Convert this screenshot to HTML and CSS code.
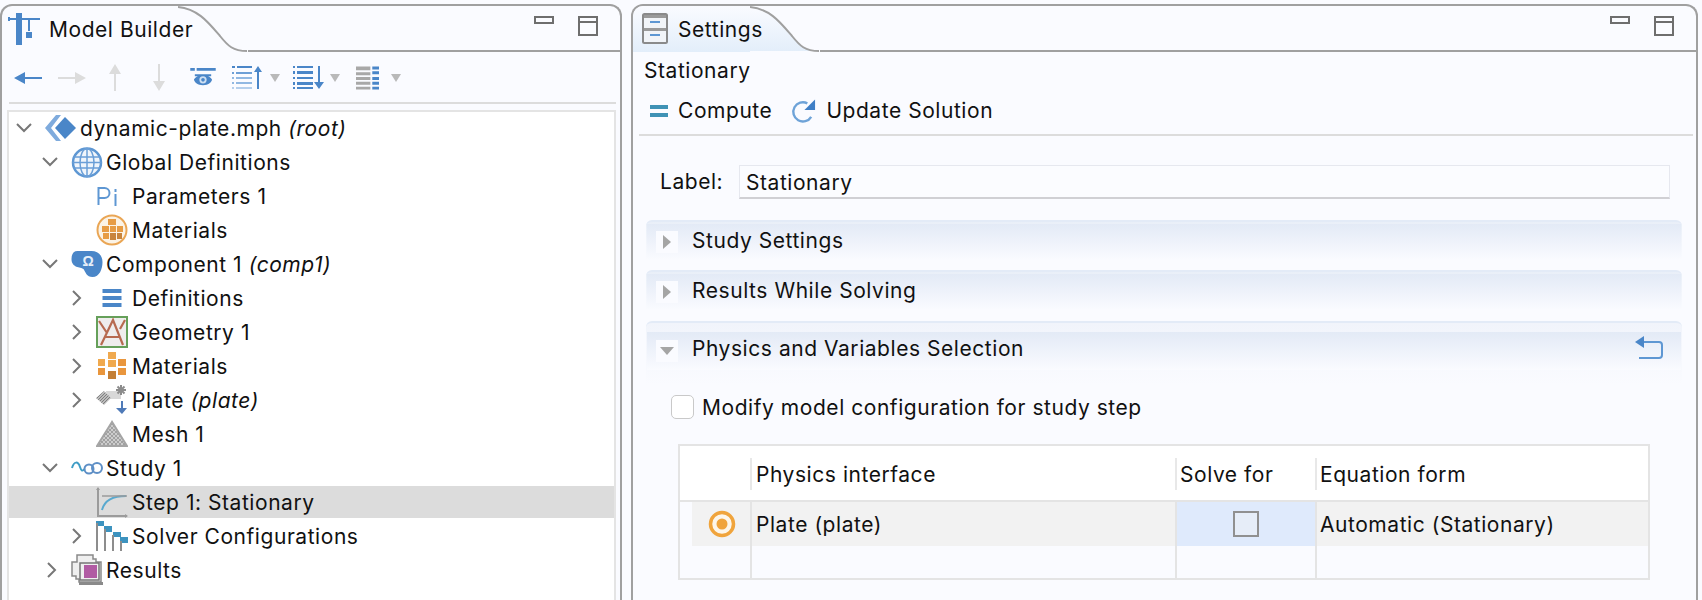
FILE: index.html
```html
<!DOCTYPE html>
<html lang="en">
<head>
<meta charset="utf-8">
<title>Model Builder and Settings</title>
<link rel="stylesheet" href="styles.css">
</head>
<body>
<div class="app">
  <section class="panel panel-left">
    <header class="panel-head">
      <div class="tab">
        <svg class="tab-icon" width="34" height="34" viewBox="0 0 34 34"><path fill="#4a86c8" d="M8 1h6v32H8zM0 5h2v1h30v2H22v11h-2V8H2v1H0z"/><rect x="18" y="20" width="6" height="6" fill="#4a86c8"/></svg>
        <span class="tab-title">Model Builder</span>
      </div>
      <svg class="tab-curve" width="70" height="46" viewBox="0 0 70 46"><path d="M0 1C20 3 30 16 42 30 50 40 55 45 69 45" fill="none" stroke="#a0a0a0" stroke-width="2"/></svg>
      <div class="head-rest">
        <span class="btn-min"></span><span class="btn-max"></span>
      </div>
    </header>
    <div class="toolbar">
      <svg width="28" height="14" viewBox="0 0 28 14" class="t1"><path fill="#4a86c8" d="M0 7l11-6v5h17v2H11v5z"/></svg>
      <svg width="28" height="14" viewBox="0 0 28 14" class="t2"><path fill="#dcdcdc" d="M28 7L17 1v5H0v2h17v5z"/></svg>
      <svg width="14" height="28" viewBox="0 0 14 28" class="t3"><path fill="#dcdcdc" d="M7 0l6 10H8v17H6V10H1z"/></svg>
      <svg width="14" height="28" viewBox="0 0 14 28" class="t4"><path fill="#dcdcdc" d="M7 27l6-10H8V0H6v17H1z"/></svg>
      <svg width="26" height="20" viewBox="0 0 28 22" class="t5"><path fill="#4a86c8" d="M0 0h5v3H0zM7 0h21v3H7zM5 7h18v2H5zM14 8c6 0 9 3 10 5-1 3-4 6-10 6S5 16 4 13c1-2 4-5 10-5z"/><circle cx="14" cy="13" r="4" fill="#cfe0f2"/><circle cx="14" cy="13" r="2" fill="#4a86c8"/></svg>
      <svg width="32" height="24" viewBox="0 0 32 24" class="t6"><path fill="#4a86c8" d="M2 0h3v2H2zM7 0h15v2H7z"/><path fill="#6d9fd6" d="M2 6h2v2H2zM6 6h16v2H6z"/><path fill="#91b8e2" d="M2 11h2v2H2zM6 11h16v2H6zM2 16h2v2H2zM6 16h16v2H6z"/><path fill="#b5cfec" d="M2 21h2v2H2zM6 21h16v2H6z"/><path fill="#4a86c8" d="M28 0l4 6h-3v17h-2V6h-3z"/></svg>
      <svg class="caret c-a" width="10" height="8" viewBox="0 0 10 8"><path fill="#b9b9b9" d="M0 0h10L5 8z"/></svg>
      <svg width="32" height="24" viewBox="0 0 32 24" class="t7"><path fill="#4a86c8" d="M0 0h2v2H0zM4 0h16v2H4zM0 5h2v3H0zM4 5h16v3H4zM0 11h2v2H0zM4 11h16v2H4zM0 16h2v3H0zM4 16h16v3H4zM0 21h2v2H0zM4 21h16v2H4zM25 0h2v16h4l-5 7-5-7h4z"/></svg>
      <svg class="caret c-b" width="10" height="8" viewBox="0 0 10 8"><path fill="#b9b9b9" d="M0 0h10L5 8z"/></svg>
      <svg width="23" height="24" viewBox="0 0 24 24" class="t8"><path fill="#a8a8a8" d="M0 0h15v4H0zM0 6h15v3H0zM0 11h15v3H0zM0 16h15v3H0zM0 21h15v3H0z"/><path fill="#4a86c8" d="M17 0h7v3h-7zM17 5h7v3h-7zM17 11h7v3h-7zM17 16h7v3h-7zM17 21h7v3h-7z"/></svg>
      <svg class="caret c-c" width="10" height="8" viewBox="0 0 10 8"><path fill="#b9b9b9" d="M0 0h10L5 8z"/></svg>
    </div>
    <div class="tree">
      <div class="row l0">
        <svg class="chev" width="30" height="16" viewBox="0 0 30 16"><path d="M8 4l7 7 7-7" fill="none" stroke="#777" stroke-width="2"/></svg>
        <svg class="ico" width="32" height="26" viewBox="0 0 32 26"><path fill="#7fabdd" d="M11 0L0 13l11 13h5L6 13 16 0z"/><path fill="#4a86c8" d="M20 2l11 11-11 11-10-11z"/></svg>
        <span>dynamic-plate.mph <em>(root)</em></span>
      </div>
      <div class="row l1">
        <svg class="chev" width="30" height="16" viewBox="0 0 30 16"><path d="M8 4l7 7 7-7" fill="none" stroke="#777" stroke-width="2"/></svg>
        <svg class="ico" width="31" height="31" viewBox="0 0 31 31"><circle cx="15.500" cy="15.500" r="14" fill="#f0f5fb" stroke="#5e97d3" stroke-width="2.500"/><g fill="none" stroke="#6b9fd7" stroke-width="1.500"><ellipse cx="15.500" cy="15.500" rx="7" ry="14"/><path d="M15.500 1v29M2 10h27M2 21h27M1 15.500h29"/></g></svg>
        <span>Global Definitions</span>
      </div>
      <div class="row l2">
        <span class="chev chev-none"></span>
        <svg class="ico" width="31" height="24" viewBox="0 0 31 24"><g fill="none" stroke="#5e97d3" stroke-width="2"><path d="M2 21V4h6a4 4 0 010 10H2"/></g><path fill="#5e97d3" d="M18 5h2v3h-2zM18 10h2v12h-2z"/></svg>
        <span>Parameters 1</span>
      </div>
      <div class="row l2">
        <span class="chev chev-none"></span>
        <svg class="ico" width="32" height="32" viewBox="0 0 32 32"><circle cx="16" cy="16" r="14.500" fill="#fbf3e6" stroke="#eaa655" stroke-width="2"/><g fill="#e79c44"><rect x="12" y="5" width="8" height="6"/><rect x="6" y="12" width="7" height="6"/><rect x="14" y="12" width="6" height="6"/><rect x="21" y="12" width="6" height="6"/><rect x="7" y="19" width="6" height="6"/></g><g fill="#c8843c"><rect x="14" y="19" width="6" height="7"/><rect x="21" y="19" width="5" height="6"/></g></svg>
        <span>Materials</span>
      </div>
      <div class="row l1">
        <svg class="chev" width="30" height="16" viewBox="0 0 30 16"><path d="M8 4l7 7 7-7" fill="none" stroke="#777" stroke-width="2"/></svg>
        <svg class="ico" width="31" height="28" viewBox="0 0 31 28"><path fill="#4a86c8" d="M6 1h14c6 0 11 4 11 11 0 7-3 15-10 15-6 0-7-5-9-8-3-2-12-1-12-10 0-5 2-8 6-8z"/><text x="11" y="16" class="omega">Ω</text></svg>
        <span>Component 1 <em>(comp1)</em></span>
      </div>
      <div class="row l2">
        <svg class="chev" width="30" height="20" viewBox="0 0 30 20"><path d="M13 3l7 7-7 7" fill="none" stroke="#777" stroke-width="2"/></svg>
        <svg class="ico" width="31" height="18" viewBox="0 0 31 18"><path fill="#4a86c8" d="M6 0h19v4H6zM6 7h19v4H6zM6 14h19v4H6z"/></svg>
        <span>Definitions</span>
      </div>
      <div class="row l2">
        <svg class="chev" width="30" height="20" viewBox="0 0 30 20"><path d="M13 3l7 7-7 7" fill="none" stroke="#777" stroke-width="2"/></svg>
        <svg class="ico" width="32" height="32" viewBox="0 0 32 32"><rect x="1" y="1" width="30" height="30" fill="#efeded" stroke="#66a05a" stroke-width="2"/><path d="M5 29L17 4l10 25M9 21h15M3 5l8 12M29 4l-5 9" fill="none" stroke="#b76a50" stroke-width="2.200"/></svg>
        <span>Geometry 1</span>
      </div>
      <div class="row l2">
        <svg class="chev" width="30" height="20" viewBox="0 0 30 20"><path d="M13 3l7 7-7 7" fill="none" stroke="#777" stroke-width="2"/></svg>
        <svg class="ico" width="32" height="28" viewBox="0 0 32 28"><g fill="#f0a94e"><rect x="12" y="0" width="8" height="7"/><rect x="2" y="7" width="7" height="7"/><rect x="12" y="8" width="8" height="7"/></g><g fill="#e9963d"><rect x="22" y="7" width="8" height="7"/><rect x="2" y="16" width="7" height="7"/><rect x="22" y="16" width="8" height="7"/></g><rect x="12" y="19" width="8" height="8" fill="#c47f35"/></svg>
        <span>Materials</span>
      </div>
      <div class="row l2">
        <svg class="chev" width="30" height="20" viewBox="0 0 30 20"><path d="M13 3l7 7-7 7" fill="none" stroke="#777" stroke-width="2"/></svg>
        <svg class="ico" width="32" height="32" viewBox="0 0 32 32"><defs><pattern id="hatch" width="3" height="3" patternUnits="userSpaceOnUse"><rect width="3" height="3" fill="#bdbdbd"/><path d="M0 3l3-3" stroke="#7f7f7f" stroke-width="1"/></pattern></defs><path fill="#d8d8d8" d="M10 7h15v8H11z"/><path fill="url(#hatch)" d="M0 14l8-7 7 7-7 7z"/><path stroke="#8c8c8c" stroke-width="2" d="M25 1v10M20 6h10M21.500 2.500l7 7M28.500 2.500l-7 7"/><path fill="#4f7ab8" d="M25 17h2v7h4l-5 6-6-6h5z"/></svg>
        <span>Plate <em>(plate)</em></span>
      </div>
      <div class="row l2">
        <span class="chev chev-none"></span>
        <svg class="ico" width="32" height="28" viewBox="0 0 32 28"><defs><pattern id="mesh" width="4" height="4" patternUnits="userSpaceOnUse"><rect width="4" height="4" fill="#cdcdcd"/><path d="M0 4L4 0M0 0l4 4" stroke="#969696" stroke-width=".8"/></pattern></defs><path fill="url(#mesh)" stroke="#a5a5a5" stroke-width="2" d="M16 2L1 26h30z"/></svg>
        <span>Mesh 1</span>
      </div>
      <div class="row l1">
        <svg class="chev" width="30" height="16" viewBox="0 0 30 16"><path d="M8 4l7 7 7-7" fill="none" stroke="#777" stroke-width="2"/></svg>
        <svg class="ico" width="32" height="16" viewBox="0 0 32 16"><path d="M1 8c2-7 6-7 8-1s3 3 5 2" fill="none" stroke="#3f9dc6" stroke-width="2"/><circle cx="18" cy="9" r="4.500" fill="none" stroke="#5e8fc6" stroke-width="2"/><circle cx="26" cy="8" r="5" fill="none" stroke="#5e8fc6" stroke-width="2"/></svg>
        <span>Study 1</span>
      </div>
      <div class="row l2 selected">
        <span class="chev chev-none"></span>
        <svg class="ico" width="32" height="32" viewBox="0 0 32 32"><path d="M2 2v28h29" fill="none" stroke="#9b9b9b" stroke-width="2"/><path d="M0 4l2-3 2 3zM29 28l3 2-3 2z" fill="#9b9b9b"/><path d="M6 24c2-8 8-14 24-14" fill="none" stroke="#59a9cf" stroke-width="2"/><path d="M6 10h25" stroke="#9b9b9b" stroke-width="1.500"/></svg>
        <span>Step 1: Stationary</span>
      </div>
      <div class="row l2">
        <svg class="chev" width="30" height="20" viewBox="0 0 30 20"><path d="M13 3l7 7-7 7" fill="none" stroke="#777" stroke-width="2"/></svg>
        <svg class="ico" width="32" height="30" viewBox="0 0 32 30"><path fill="#3d93bf" d="M0 0h8v5H0zM8 5h8v6H8zM17 11h8v5h-8zM24 16h8v6h-8z"/><path stroke="#8d8d8d" stroke-width="2" d="M1 2v28M9 8v22M17 14v16M25 20v10"/></svg>
        <span>Solver Configurations</span>
      </div>
      <div class="row l1">
        <svg class="chev" width="30" height="20" viewBox="0 0 30 20"><path d="M13 3l7 7-7 7" fill="none" stroke="#777" stroke-width="2"/></svg>
        <svg class="ico" width="32" height="32" viewBox="0 0 32 32"><path fill="#efefef" stroke="#8a8a8a" stroke-width="1.500" d="M6 1h16v4h3v3h5v20H8v-3H5v-3H1V8h5z"/><path fill="#8a8a8a" d="M0 22l8 6v3h24v-3H8z"/><rect x="9" y="9" width="19" height="17" fill="#efefef" stroke="#777" stroke-width="1.500"/><rect x="13" y="11" width="13" height="13" fill="#b15ba3"/></svg>
        <span>Results</span>
      </div>
    </div>
  </section>

  <section class="panel panel-right">
    <header class="panel-head">
      <div class="tab tab-active">
        <svg class="tab-icon" width="26" height="32" viewBox="0 0 26 32"><rect x="1" y="1" width="24" height="29" rx="1.500" fill="#f1f4f8" stroke="#8a8a8a" stroke-width="2"/><path fill="#9a9a9a" d="M2 2h22v3H2zM2 15h22v3H2z"/><path fill="#5e97d3" d="M8 8h10v2H8zM8 21h10v2H8z"/></svg>
        <span class="tab-title">Settings</span>
      </div>
      <svg class="tab-curve" width="70" height="46" viewBox="0 0 70 46"><defs><linearGradient id="tabfill" x1="0" y1="0" x2="0" y2="1"><stop offset="0" stop-color="#fafbff"/><stop offset="1" stop-color="#e3eefa"/></linearGradient></defs><path d="M0 1C20 3 30 16 42 30 50 40 55 45 69 45H0z" fill="url(#tabfill)"/><path d="M0 1C20 3 30 16 42 30 50 40 55 45 69 45" fill="none" stroke="#a0a0a0" stroke-width="2"/></svg>
      <div class="head-rest">
        <span class="btn-min"></span><span class="btn-max"></span>
      </div>
    </header>
    <div class="settings-title">Stationary</div>
    <div class="actions">
      <span class="action"><svg width="18" height="12" viewBox="0 0 18 12"><path fill="#3f92b5" d="M0 0h18v4H0zM0 8h18v4H0z"/></svg>Compute</span>
      <span class="action"><svg width="25" height="26" viewBox="0 0 26 26"><path d="M21 19a10 10 0 11-4-14" fill="none" stroke="#6ea3d8" stroke-width="2.500"/><path fill="#3f7fc6" d="M25 1v11H14z"/></svg>Update Solution</span>
    </div>
    <div class="body">
      <div class="label-row">
        <span class="label-text">Label:</span>
        <div class="label-input">Stationary</div>
      </div>
      <div class="section">
        <div class="sec-head">
          <span class="twist"><svg width="8" height="14" viewBox="0 0 8 14"><path fill="#a5a5a5" d="M0 0l8 7-8 7z"/></svg></span>
          <span class="sec-title">Study Settings</span>
        </div>
      </div>
      <div class="section">
        <div class="sec-head">
          <span class="twist"><svg width="8" height="14" viewBox="0 0 8 14"><path fill="#a5a5a5" d="M0 0l8 7-8 7z"/></svg></span>
          <span class="sec-title">Results While Solving</span>
        </div>
      </div>
      <div class="section section-open">
        <div class="sec-head">
          <span class="twist"><svg width="14" height="8" viewBox="0 0 14 8"><path fill="#a5a5a5" d="M0 0h14L7 8z"/></svg></span>
          <span class="sec-title">Physics and Variables Selection</span>
          <svg class="undo" width="28" height="24" viewBox="0 0 28 24"><path d="M8 6h16a3 3 0 013 3v10a3 3 0 01-3 3H4" fill="none" stroke="#5e97d3" stroke-width="2"/><path fill="#4a86c8" d="M0 6l9-6v12z"/></svg>
        </div>
      </div>
      <label class="check-row"><span class="check"></span>Modify model configuration for study step</label>
      <div class="table">
        <div class="cell head c1"></div>
        <div class="cell head c2"><span class="head-sep"></span>Physics interface</div>
        <div class="cell head c3"><span class="head-sep"></span>Solve for</div>
        <div class="cell head c4"><span class="head-sep"></span>Equation form</div>
        <div class="cell data c1"><span class="row-shade"></span><svg class="radio" width="28" height="28" viewBox="0 0 28 28"><circle cx="14" cy="14" r="11.500" fill="#fdf6ea" stroke="#f0a43c" stroke-width="3.500"/><circle cx="14" cy="14" r="5.500" fill="#f0a43c"/></svg></div>
        <div class="cell data c2">Plate (plate)</div>
        <div class="cell data c3 solve"><span class="solve-box"></span></div>
        <div class="cell data c4">Automatic (Stationary)</div>
        <div class="cell empty"></div>
        <div class="cell empty"></div>
        <div class="cell empty"></div>
        <div class="cell empty"></div>
      </div>
    </div>
  </section>
</div>
</body>
</html>
```

FILE: styles.css
```css
* { box-sizing: border-box; }
html, body { margin: 0; height: 100%; overflow: hidden; background: #fafbff; }
body { font-family: Inter, "Liberation Sans", sans-serif; font-size: 21px; letter-spacing: 0.55px; color: #111; }

.app { display: flex; height: 600px; padding-top: 4px; gap: 9px; }
.panel { border: 2px solid #a0a0a0; border-bottom: 0; border-radius: 12px 12px 0 0; display: flex; flex-direction: column; height: 596px; overflow: hidden; }
.panel-left { width: 622px; }
.panel-right { width: 1067px; }

.panel-head { display: flex; height: 46px; flex: none; }
.tab { display: flex; align-items: center; flex: none; position: relative; z-index: 1; }
.tab-icon { flex: none; display: block; }
.panel-left .tab { width: 176px; padding-left: 6px; }
.tab-title { margin-left: 7px; white-space: nowrap; flex: none; }
.tab-active { width: 117px; padding-left: 9px; background: linear-gradient(#fafbff, #e3eefa); }
.tab-active .tab-title { margin-left: 10px; }
.tab-curve { flex: none; display: block; }
.head-rest { flex: 1; border-bottom: 2px solid #a0a0a0; display: flex; justify-content: flex-end; align-items: flex-start; padding: 10px 22px 0 0; gap: 24px; }
.btn-min { width: 20px; height: 8px; border: 2px solid #6e6e6e; }
.btn-max { width: 20px; height: 20px; border: 2px solid #6e6e6e; background: linear-gradient(#6e6e6e, #6e6e6e) 0 3px / 100% 2px no-repeat; }

.toolbar { height: 52px; margin: 0 4px 0 7px; border-bottom: 2px solid #dcdcdc; display: flex; align-items: center; flex: none; padding-left: 5px; padding-top: 1px; }
.toolbar svg { display: block; flex: none; }
.t2 { margin-left: 16px; }
.t3 { margin-left: 22px; }
.t4 { margin-left: 30px; }
.t5 { margin-left: 24px; }
.t6 { margin-left: 14px; }
.t7 { margin-left: 13px; }
.t8 { margin-left: 16px; }
.c-a { margin-left: 8px; }
.c-b { margin-left: 5px; }
.c-c { margin-left: 12px; }

.tree { margin: 6px 4px 0 5px; flex: 1; border: 2px solid #e4e4e4; border-bottom: 0; background: #fff; }
.row { display: flex; align-items: center; height: 32px; margin-bottom: 2px; white-space: nowrap; }
.row em { font-style: italic; }
.chev { flex: none; width: 30px; margin-right: 6px; display: block; }
.ico { flex: none; width: 32px; margin-right: 4px; display: block; }
.omega { font-family: "Liberation Sans", sans-serif; font-size: 14px; font-weight: 700; fill: #e6eff9; letter-spacing: 0; }
.l0 { padding-left: 0; }
.l1 { padding-left: 26px; }
.l2 { padding-left: 51px; }
.l0 .ico, .l1 .ico { margin-right: 3px; }
.selected { background: #dcdcdc; }

.settings-title { height: 36px; padding-left: 11px; display: flex; align-items: center; flex: none; }
.actions { display: flex; align-items: center; margin: 0 3px 0 6px; height: 48px; padding-left: 11px; padding-bottom: 1px; border-bottom: 2px solid #dcdcdc; flex: none; gap: 19px; }
.action { display: flex; align-items: center; gap: 10px; }

.body { padding: 28px 15px 0 13px; flex: 1; }
.label-row { display: flex; align-items: center; height: 35px; padding-left: 14px; }
.label-text { width: 79px; flex: none; }
.label-input { width: 931px; height: 34px; border: 1px solid #e6e8ef; border-bottom: 2px solid #d0d0d4; padding: 2px 0 0 6px; display: flex; align-items: center; background: #fbfcff; }

.section { width: 1036px; height: 40px; margin-bottom: 10px; padding: 2px 1px 0; border-top: 2px solid #e3ebf7; border-radius: 6px 6px 0 0; background: linear-gradient(#e9eff8, #fafbff); }
.label-row + .section { margin-top: 21px; }
.sec-head { height: 36px; padding-left: 9px; display: flex; align-items: center; background: linear-gradient(#e3eaf6, #fafbff); gap: 14px; position: relative; }
.sec-title { margin-bottom: 4px; }
.section-open { height: 64px; margin-top: 11px; margin-bottom: 0; padding-top: 9px; background: linear-gradient(#f1f4fb, #fafbff); }
.section-open .sec-head { height: 38px; }
.section-open .sec-title { margin-bottom: 6px; }
.twist { width: 22px; height: 22px; background: #fafbff; display: flex; align-items: center; justify-content: center; flex: none; }
.undo { position: absolute; right: 18px; top: 4px; }

.check-row { display: flex; align-items: center; gap: 8px; margin-left: 25px; height: 26px; margin-top: 9px; }
.check { width: 23px; height: 24px; border: 1px solid #c9c9c9; border-radius: 5px; background: #fff; flex: none; }

.table { display: grid; grid-template-columns: 70px 425px 140px 1fr; grid-template-rows: 56px 44px 32px; width: 972px; margin: 24px 0 0 32px; border: 2px solid #e4e4e4; }
.cell { display: flex; align-items: center; padding-left: 4px; border-left: 2px solid #e4e4e4; position: relative; }
.cell.c1, .cell.empty:nth-child(9) { border-left: 0; }
.head { background: #fff; border-left: 0; border-bottom: 2px solid #e4e4e4; padding: 2px 0 0 6px; }
.head.c3, .head.c4 { padding-left: 5px; }
.data { background: #f2f2f2; }
.data.c4 { padding-left: 3px; }
.head-sep { position: absolute; left: 0; top: 12px; height: 32px; width: 2px; background: #e8e8e8; }
.data.c1 { background: transparent; justify-content: center; padding: 0 0 0 14px; }
.row-shade { position: absolute; left: 12px; right: 0; top: 0; bottom: 0; background: #f2f2f2; }
.radio { position: relative; display: block; }
.solve { background: #dfeafc; justify-content: center; padding-left: 0; }
.solve-box { width: 26px; height: 26px; border: 2px solid #909090; background: #e6edf8; }
```
